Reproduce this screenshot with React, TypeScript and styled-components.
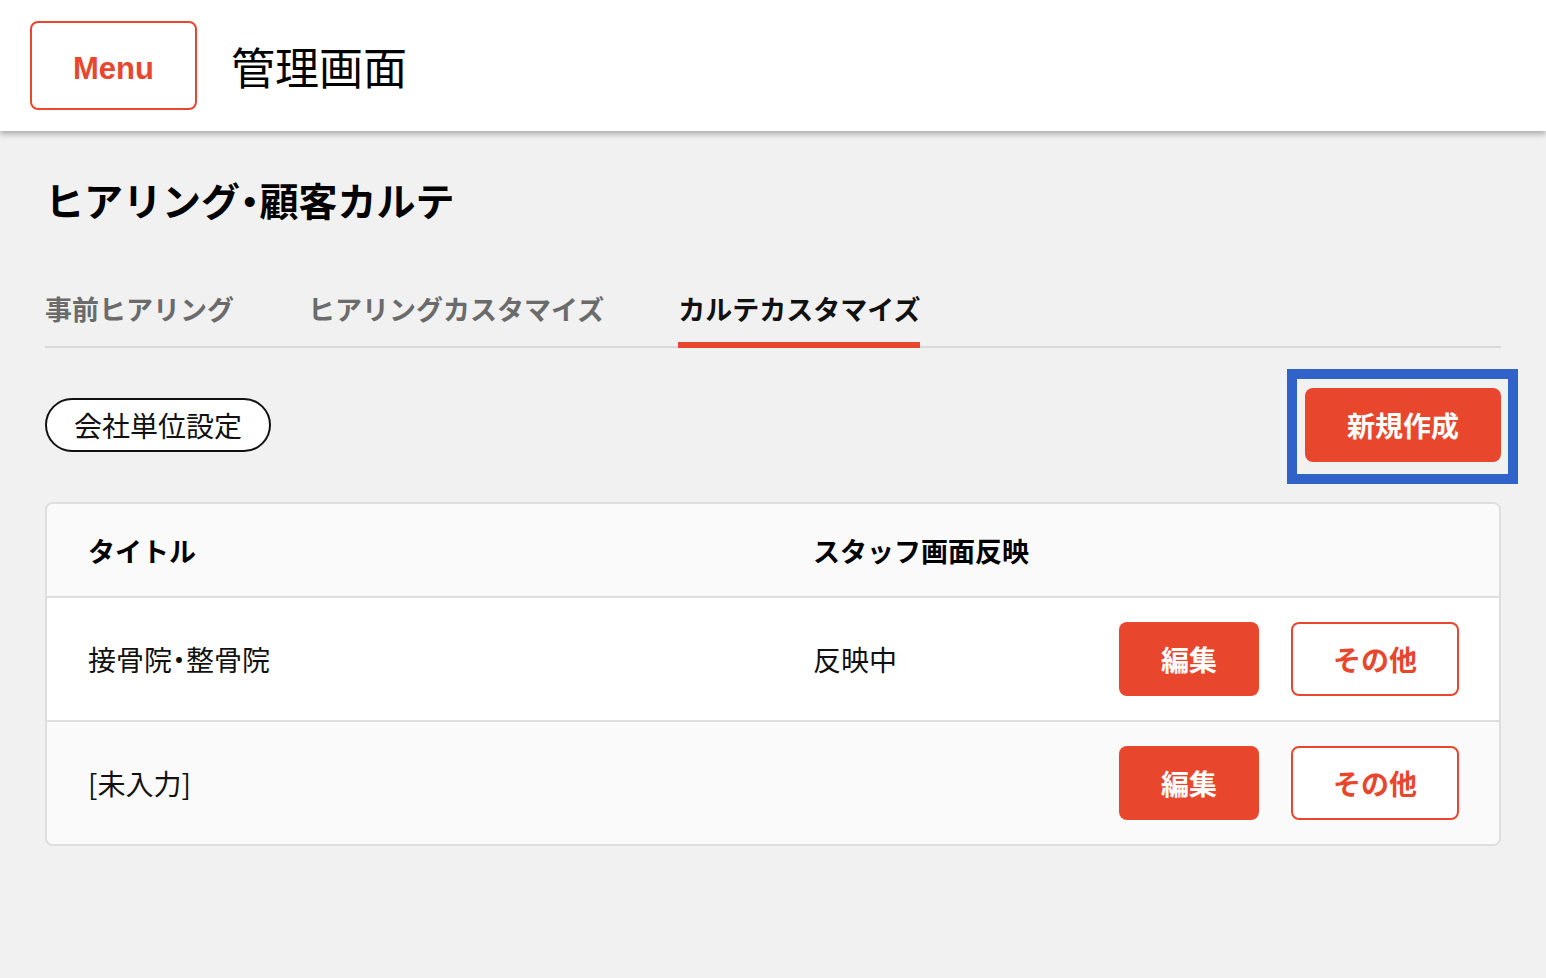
import React from 'react';
import styled, { createGlobalStyle } from 'styled-components';

const GlobalStyle = createGlobalStyle`
    html, body {
        margin: 0;
        padding: 0;
        background: #f1f1f1;
        font-family: "Noto Sans CJK JP", "Noto Sans", sans-serif;
        color: #111;
    }
    * {
        box-sizing: border-box;
    }
`;

const RED = '#e8472e';

const rows = [
    { title: ['接骨院', '整骨院'], status: '反映中' },
    { title: ['[未入力]'], status: '' },
];

const App = () => {
    return (
        <>
            <GlobalStyle />
            <Header>
                <MenuButton>Menu</MenuButton>
                <AppTitle>管理画面</AppTitle>
            </Header>
            <Main>
                <PageTitle>
                    ヒアリング<Dot>・</Dot>顧客カルテ
                </PageTitle>
                <Tabs>
                    <Tab>事前ヒアリング</Tab>
                    <Tab>ヒアリングカスタマイズ</Tab>
                    <Tab $active>カルテカスタマイズ</Tab>
                </Tabs>
                <Toolbar>
                    <PillButton>会社単位設定</PillButton>
                    <Highlight>
                        <PrimaryButton $wide>新規作成</PrimaryButton>
                    </Highlight>
                </Toolbar>
                <Table>
                    <HeadRow>
                        <HeadCell>タイトル</HeadCell>
                        <HeadCell>スタッフ画面反映</HeadCell>
                        <span />
                    </HeadRow>
                    {rows.map((row, i) => (
                        <Row key={i} $striped={i % 2 === 1}>
                            <Cell>
                                {row.title.map((part, j) => (
                                    <React.Fragment key={j}>
                                        {j > 0 && <Dot>・</Dot>}
                                        {part}
                                    </React.Fragment>
                                ))}
                            </Cell>
                            <Cell>{row.status}</Cell>
                            <Actions>
                                <PrimaryButton>編集</PrimaryButton>
                                <OutlineButton>その他</OutlineButton>
                            </Actions>
                        </Row>
                    ))}
                </Table>
            </Main>
        </>
    );
};

export default App;

const Header = styled.header`
    position: relative;
    z-index: 1;
    height: 131px;
    display: flex;
    align-items: center;
    gap: 34px;
    padding: 0 30px;
    background: #fff;
    box-shadow: 0 3px 6px rgba(0, 0, 0, 0.3);
`;

const MenuButton = styled.button`
    width: 167px;
    height: 89px;
    padding: 6px 0 0;
    border: 2px solid ${RED};
    border-radius: 8px;
    background: #fff;
    color: ${RED};
    font-family: "Liberation Sans", Arial, sans-serif;
    font-size: 31px;
    font-weight: 700;
    cursor: pointer;
`;

const AppTitle = styled.h1`
    margin: 0;
    font-size: 44px;
    font-weight: 400;
    line-height: 1;
    color: #000;
`;

const Main = styled.main`
    padding: 42px 45px 0;
`;

const PageTitle = styled.h2`
    margin: 0;
    font-size: 39px;
    font-weight: 700;
    line-height: 52px;
    color: #000;
`;

// narrow middle dot, as in the proportional Japanese font
const Dot = styled.span`
    font-feature-settings: "palt";
`;

const Tabs = styled.nav`
    display: flex;
    gap: 74px;
    margin-top: 64px;
    border-bottom: 2px solid #d9d9d9;
`;

const Tab = styled.div<{ $active?: boolean }>`
    padding-bottom: 13px;
    margin-bottom: -2px;
    font-size: 27px;
    font-weight: 700;
    line-height: 40px;
    color: ${(p) => (p.$active ? '#111' : '#6b6b6b')};
    border-bottom: 6px solid ${(p) => (p.$active ? RED : 'transparent')};
`;

const Toolbar = styled.div`
    display: flex;
    align-items: center;
    justify-content: space-between;
    margin: 40px 0 40px;
`;

const PillButton = styled.button`
    height: 54px;
    padding: 0 27px;
    border: 2px solid #111;
    border-radius: 27px;
    background: #fff;
    color: #111;
    font-family: inherit;
    font-size: 28px;
    font-weight: 400;
    cursor: pointer;
`;

// blue selection frame drawn around the button
const Highlight = styled.div`
    display: flex;
    padding: 9px 7px 12px 8px;
    margin: -19px -17px -22px 0;
    border: 10px solid #3162c9;
`;

const PrimaryButton = styled.button<{ $wide?: boolean }>`
    width: ${(p) => (p.$wide ? '196px' : '140px')};
    height: 74px;
    border: none;
    border-radius: 8px;
    background: ${RED};
    color: #fff;
    font-family: inherit;
    font-size: 28px;
    font-weight: 700;
    cursor: pointer;
`;

const OutlineButton = styled.button`
    width: 168px;
    height: 74px;
    border: 2px solid ${RED};
    border-radius: 8px;
    background: #fff;
    color: ${RED};
    font-family: inherit;
    font-size: 28px;
    font-weight: 700;
    cursor: pointer;
`;

const Table = styled.div`
    border: 2px solid #dedede;
    border-radius: 8px;
    overflow: hidden;
    background: #fafafa;
`;

const HeadRow = styled.div`
    display: grid;
    grid-template-columns: 725px 1fr auto;
    align-items: center;
    height: 92px;
    padding: 0 40px 0 41px;
    background: #fafafa;
`;

const HeadCell = styled.div`
    font-size: 27px;
    font-weight: 700;
    color: #000;
`;

const Row = styled.div<{ $striped: boolean }>`
    display: grid;
    grid-template-columns: 725px 1fr auto;
    align-items: center;
    height: 124px;
    padding: 0 40px 0 41px;
    border-top: 2px solid #dedede;
    background: ${(p) => (p.$striped ? '#fafafa' : '#fff')};
`;

const Cell = styled.div`
    font-size: 28px;
    font-weight: 400;
    color: #111;
`;

const Actions = styled.div`
    display: flex;
    gap: 32px;
`;
